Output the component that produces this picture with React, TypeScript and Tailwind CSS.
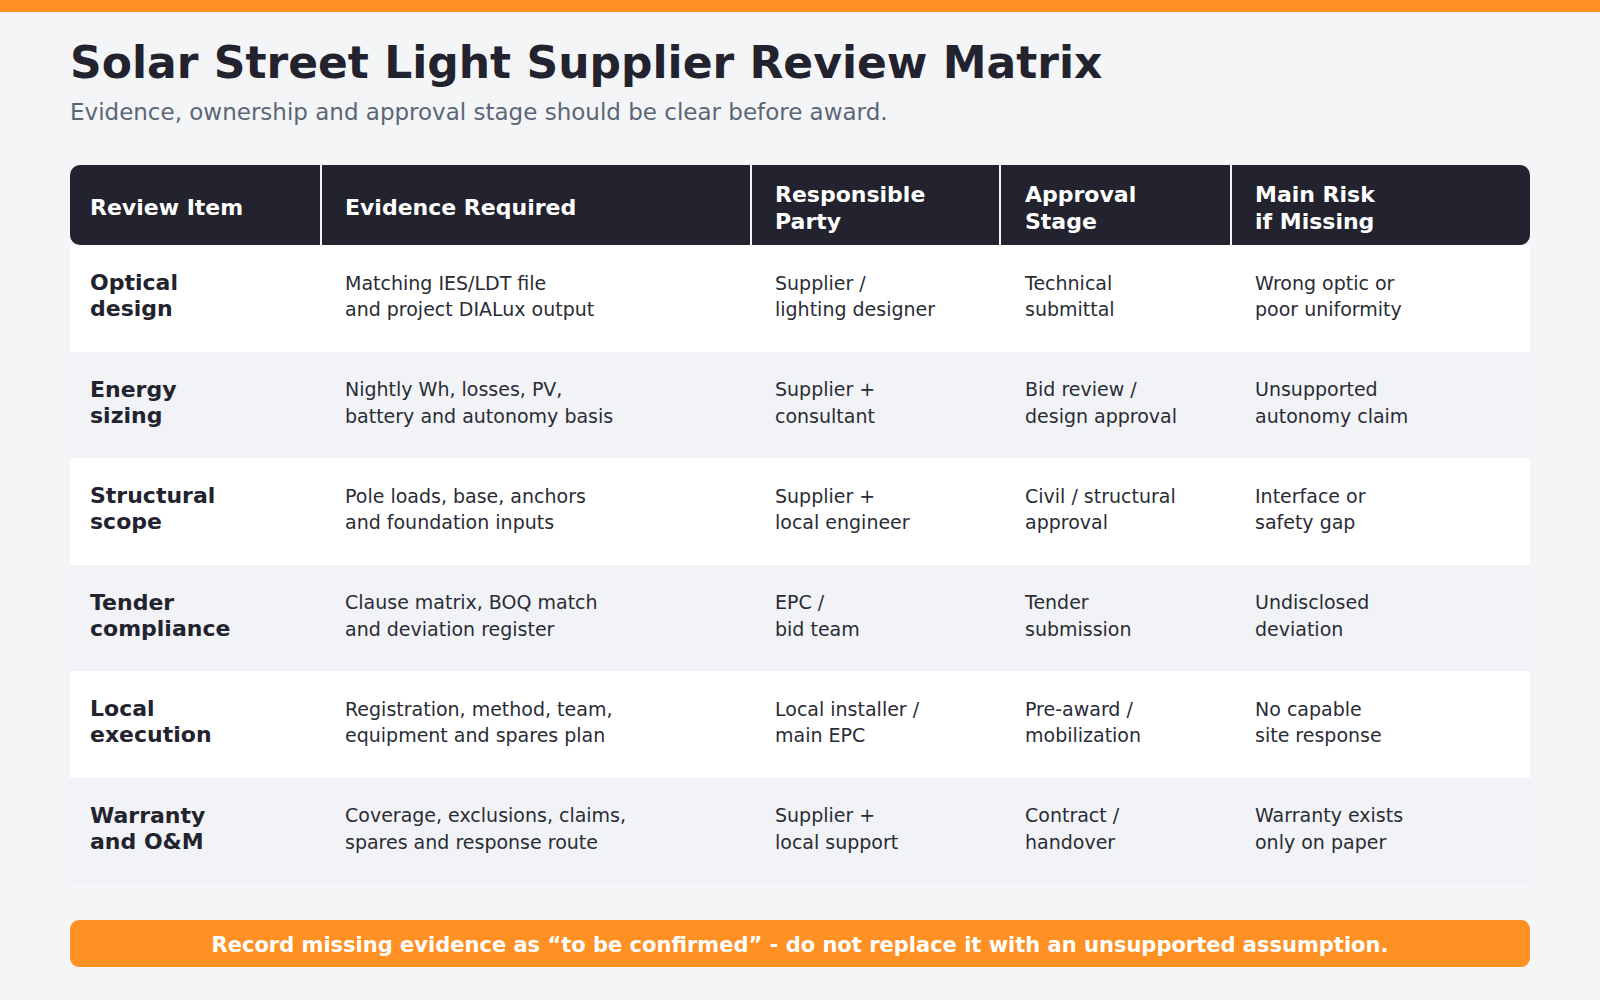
const font = '"DejaVu Sans", Verdana, sans-serif';

type Row = { item: [string, string]; evidence: [string, string]; party: [string, string]; stage: [string, string]; risk: [string, string] };

const rows: Row[] = [
  {
    item: ['Optical', 'design'],
    evidence: ['Matching IES/LDT file', 'and project DIALux output'],
    party: ['Supplier /', 'lighting designer'],
    stage: ['Technical', 'submittal'],
    risk: ['Wrong optic or', 'poor uniformity'],
  },
  {
    item: ['Energy', 'sizing'],
    evidence: ['Nightly Wh, losses, PV,', 'battery and autonomy basis'],
    party: ['Supplier +', 'consultant'],
    stage: ['Bid review /', 'design approval'],
    risk: ['Unsupported', 'autonomy claim'],
  },
  {
    item: ['Structural', 'scope'],
    evidence: ['Pole loads, base, anchors', 'and foundation inputs'],
    party: ['Supplier +', 'local engineer'],
    stage: ['Civil / structural', 'approval'],
    risk: ['Interface or', 'safety gap'],
  },
  {
    item: ['Tender', 'compliance'],
    evidence: ['Clause matrix, BOQ match', 'and deviation register'],
    party: ['EPC /', 'bid team'],
    stage: ['Tender', 'submission'],
    risk: ['Undisclosed', 'deviation'],
  },
  {
    item: ['Local', 'execution'],
    evidence: ['Registration, method, team,', 'equipment and spares plan'],
    party: ['Local installer /', 'main EPC'],
    stage: ['Pre-award /', 'mobilization'],
    risk: ['No capable', 'site response'],
  },
  {
    item: ['Warranty', 'and O&M'],
    evidence: ['Coverage, exclusions, claims,', 'spares and response route'],
    party: ['Supplier +', 'local support'],
    stage: ['Contract /', 'handover'],
    risk: ['Warranty exists', 'only on paper'],
  },
];

function Lines({ lines }: { lines: [string, string] }) {
  return (
    <>
      <div>{lines[0]}</div>
      <div>{lines[1]}</div>
    </>
  );
}

export default function App() {
  return (
    <div className="min-h-[1000px] w-[1600px] bg-[#f4f5f7]" style={{ fontFamily: font }}>
      <div className="h-3 bg-[#ff9124]" />

      <div className="px-[70px]">
        {/* Heading */}
        <h1 className="mt-[25px] text-[44px] font-bold leading-[52px] text-[#22232e]">
          Solar Street Light Supplier Review Matrix
        </h1>
        <p className="mt-2 text-[23px] leading-[30px] text-[#5b6676]">
          Evidence, ownership and approval stage should be clear before award.
        </p>

        {/* Matrix */}
        <div className="mt-[38px]">
          <div className="flex h-20 rounded-[10px] bg-[#22232e] pt-[5px] text-[22px] font-bold leading-[27px] text-white">
            <div className="flex w-[250px] items-center pl-5">Review Item</div>
            <div className="-mt-[5px] flex w-[430px] items-center border-l-2 border-[#f4f5f7] pl-[23px] pt-[5px]">
              Evidence Required
            </div>
            <div className="-mt-[5px] flex w-[249px] items-center border-l-2 border-[#f4f5f7] pl-[23px] pt-[5px]">
              <div>
                <div>Responsible</div>
                <div>Party</div>
              </div>
            </div>
            <div className="-mt-[5px] flex w-[231px] items-center border-l-2 border-[#f4f5f7] pl-6 pt-[5px]">
              <div>
                <div>Approval</div>
                <div>Stage</div>
              </div>
            </div>
            <div className="-mt-[5px] flex w-[300px] items-center border-l-2 border-[#f4f5f7] pl-[23px] pt-[5px]">
              <div>
                <div>Main Risk</div>
                <div>if Missing</div>
              </div>
            </div>
          </div>

          {rows.map((r, i) => (
            <div
              key={r.item[0]}
              className={`flex h-[106.5px] items-center pb-1 text-[19px] leading-[26.5px] text-[#2a2c35] ${
                i % 2 === 0 ? 'bg-white' : 'bg-[#f1f3f6]'
              }`}
            >
              <div className="w-[250px] pl-5 text-[22px] font-bold leading-[26px] text-[#22232e]">
                <Lines lines={r.item} />
              </div>
              <div className="w-[430px] pl-[25px]">
                <Lines lines={r.evidence} />
              </div>
              <div className="w-[249px] pl-[25px]">
                <Lines lines={r.party} />
              </div>
              <div className="w-[231px] pl-[26px]">
                <Lines lines={r.stage} />
              </div>
              <div className="w-[300px] pl-[25px]">
                <Lines lines={r.risk} />
              </div>
            </div>
          ))}
        </div>

        {/* Note */}
        <div className="mt-9 flex h-[47px] items-center justify-center rounded-[9px] bg-[#ff9124] pt-1 text-[21px] font-bold text-white">
          Record missing evidence as “to be confirmed” - do not replace it with an unsupported assumption.
        </div>
      </div>
    </div>
  );
}
